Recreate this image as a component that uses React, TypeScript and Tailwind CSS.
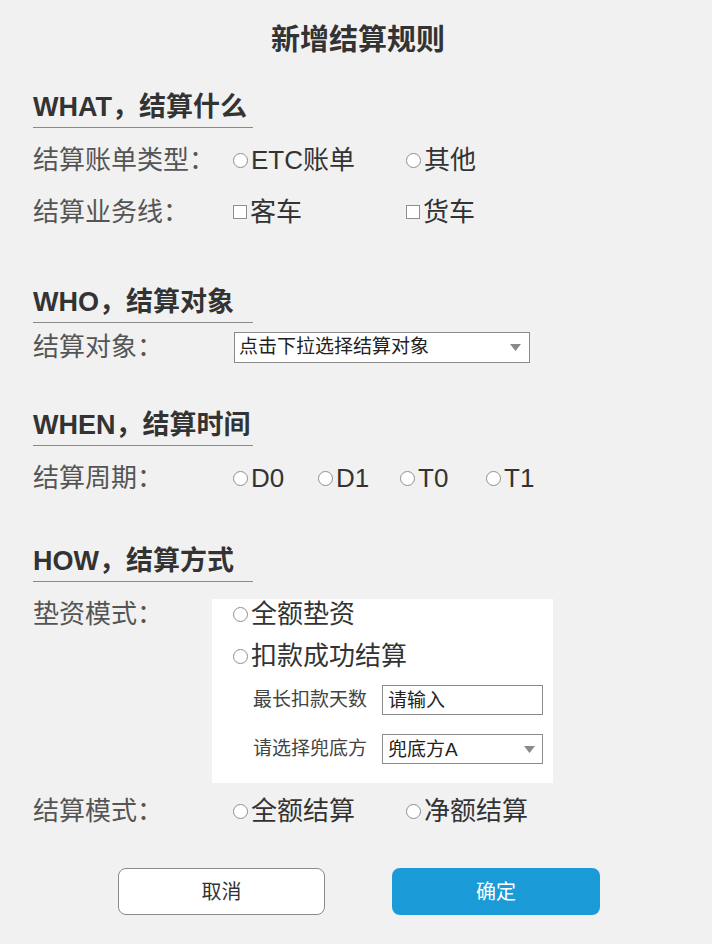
import React from "react";

function Radio() {
  return <span className="inline-block w-[15px] h-[15px] rounded-full border-[1.5px] border-[#8f8f8f] bg-white mr-[3px] shrink-0" />;
}

function Check() {
  return <span className="inline-block w-[14px] h-[14px] border-[1.5px] border-[#8f8f8f] bg-white mr-[3px] shrink-0" />;
}

function Arrow() {
  return (
    <svg width="11" height="7" viewBox="0 0 11 7" className="shrink-0">
      <path d="M0 0 L11 0 L5.5 7 Z" fill="#8a8a8a" />
    </svg>
  );
}

function Heading({ children, mt }: { children: React.ReactNode; mt: string }) {
  return (
    <div className={`ml-[33px] w-[220px] border-b-[1.5px] border-[#8a8a8a] leading-[40px] text-[27px] font-bold text-[#333] ${mt}`}>
      {children}
    </div>
  );
}

function Label({ children, w = "w-[200px]" }: { children: React.ReactNode; w?: string }) {
  return <div className={`${w} shrink-0 text-[26px] text-[#555]`}>{children}</div>;
}

function Opt({ children, w, check }: { children: React.ReactNode; w?: string; check?: boolean }) {
  return (
    <div className={`flex items-center text-[26px] text-[#333] ${w ?? ""}`}>
      {check ? <Check /> : <Radio />}
      <span>{children}</span>
    </div>
  );
}

export default function App() {
  return (
    <div className="min-h-screen bg-[#f1f1f1] pt-[20px] pb-[20px] font-['Liberation_Sans','Noto_Sans_CJK_SC',sans-serif]">
      <h1 className="h-[40px] leading-[40px] text-center text-[29px] font-bold text-[#333] pl-[4px]">新增结算规则</h1>

      <Heading mt="mt-[27px]">WHAT，结算什么</Heading>
      <div className="ml-[33px] mt-[6px] h-[52px] flex items-center leading-[30px]">
        <Label>结算账单类型：</Label>
        <Opt w="w-[173px]">ETC账单</Opt>
        <Opt>其他</Opt>
      </div>
      <div className="ml-[33px] h-[52px] flex items-center leading-[30px]">
        <Label>结算业务线：</Label>
        <Opt w="w-[173px]" check>客车</Opt>
        <Opt check>货车</Opt>
      </div>

      <Heading mt="mt-[44px]">WHO，结算对象</Heading>
      <div className="ml-[33px] h-[48px] flex items-center leading-[30px]">
        <Label w="w-[201px]">结算对象：</Label>
        <div className="w-[296px] h-[31px] border-[1.5px] border-[#8a8a8a] bg-white flex items-center justify-between pl-[4px] pr-[8px]">
          <span className="text-[19px] text-[#222] leading-[28px]">点击下拉选择结算对象</span>
          <Arrow />
        </div>
      </div>

      <Heading mt="mt-[34px]">WHEN，结算时间</Heading>
      <div className="ml-[33px] mt-[6px] h-[52px] flex items-center leading-[30px]">
        <Label>结算周期：</Label>
        <Opt w="w-[85px]">D0</Opt>
        <Opt w="w-[82px]">D1</Opt>
        <Opt w="w-[86px]">T0</Opt>
        <Opt>T1</Opt>
      </div>

      <Heading mt="mt-[37px]">HOW，结算方式</Heading>
      <div className="ml-[33px] mt-[17px] flex items-start leading-[30px]">
        <Label w="w-[179px]">垫资模式：</Label>
        <div className="w-[341px] bg-white pl-[21px] pb-[19px]">
          <div className="h-[30px] flex items-center"><Opt>全额垫资</Opt></div>
          <div className="mt-[12px] h-[30px] flex items-center"><Opt>扣款成功结算</Opt></div>
          <div className="mt-[14px] ml-[20px] flex items-center">
            <span className="w-[129px] text-[19px] text-[#444] leading-[30px]">最长扣款天数</span>
            <div className="w-[161px] h-[30px] border-[1.5px] border-[#8a8a8a] bg-white flex items-center pl-[5px]">
              <span className="text-[19px] text-[#222] leading-[27px]">请输入</span>
            </div>
          </div>
          <div className="mt-[19px] ml-[20px] flex items-center">
            <span className="w-[129px] text-[19px] text-[#444] leading-[30px]">请选择兜底方</span>
            <div className="w-[161px] h-[30px] border-[1.5px] border-[#8a8a8a] bg-white flex items-center justify-between pl-[5px] pr-[7px]">
              <span className="text-[19px] text-[#222] leading-[27px]">兜底方A</span>
              <Arrow />
            </div>
          </div>
        </div>
      </div>
      <div className="ml-[33px] mt-[2px] h-[52px] flex items-center leading-[30px]">
        <Label>结算模式：</Label>
        <Opt w="w-[173px]">全额结算</Opt>
        <Opt>净额结算</Opt>
      </div>

      <div className="mt-[31px] pl-[118px] flex gap-[67px]">
        <button className="w-[207px] h-[47px] rounded-[8px] border-[1.5px] border-[#8a8a8a] bg-white text-[20px] text-[#333]">取消</button>
        <button className="w-[208px] h-[47px] rounded-[8px] bg-[#1a9bd7] text-[20px] text-white">确定</button>
      </div>
    </div>
  );
}
